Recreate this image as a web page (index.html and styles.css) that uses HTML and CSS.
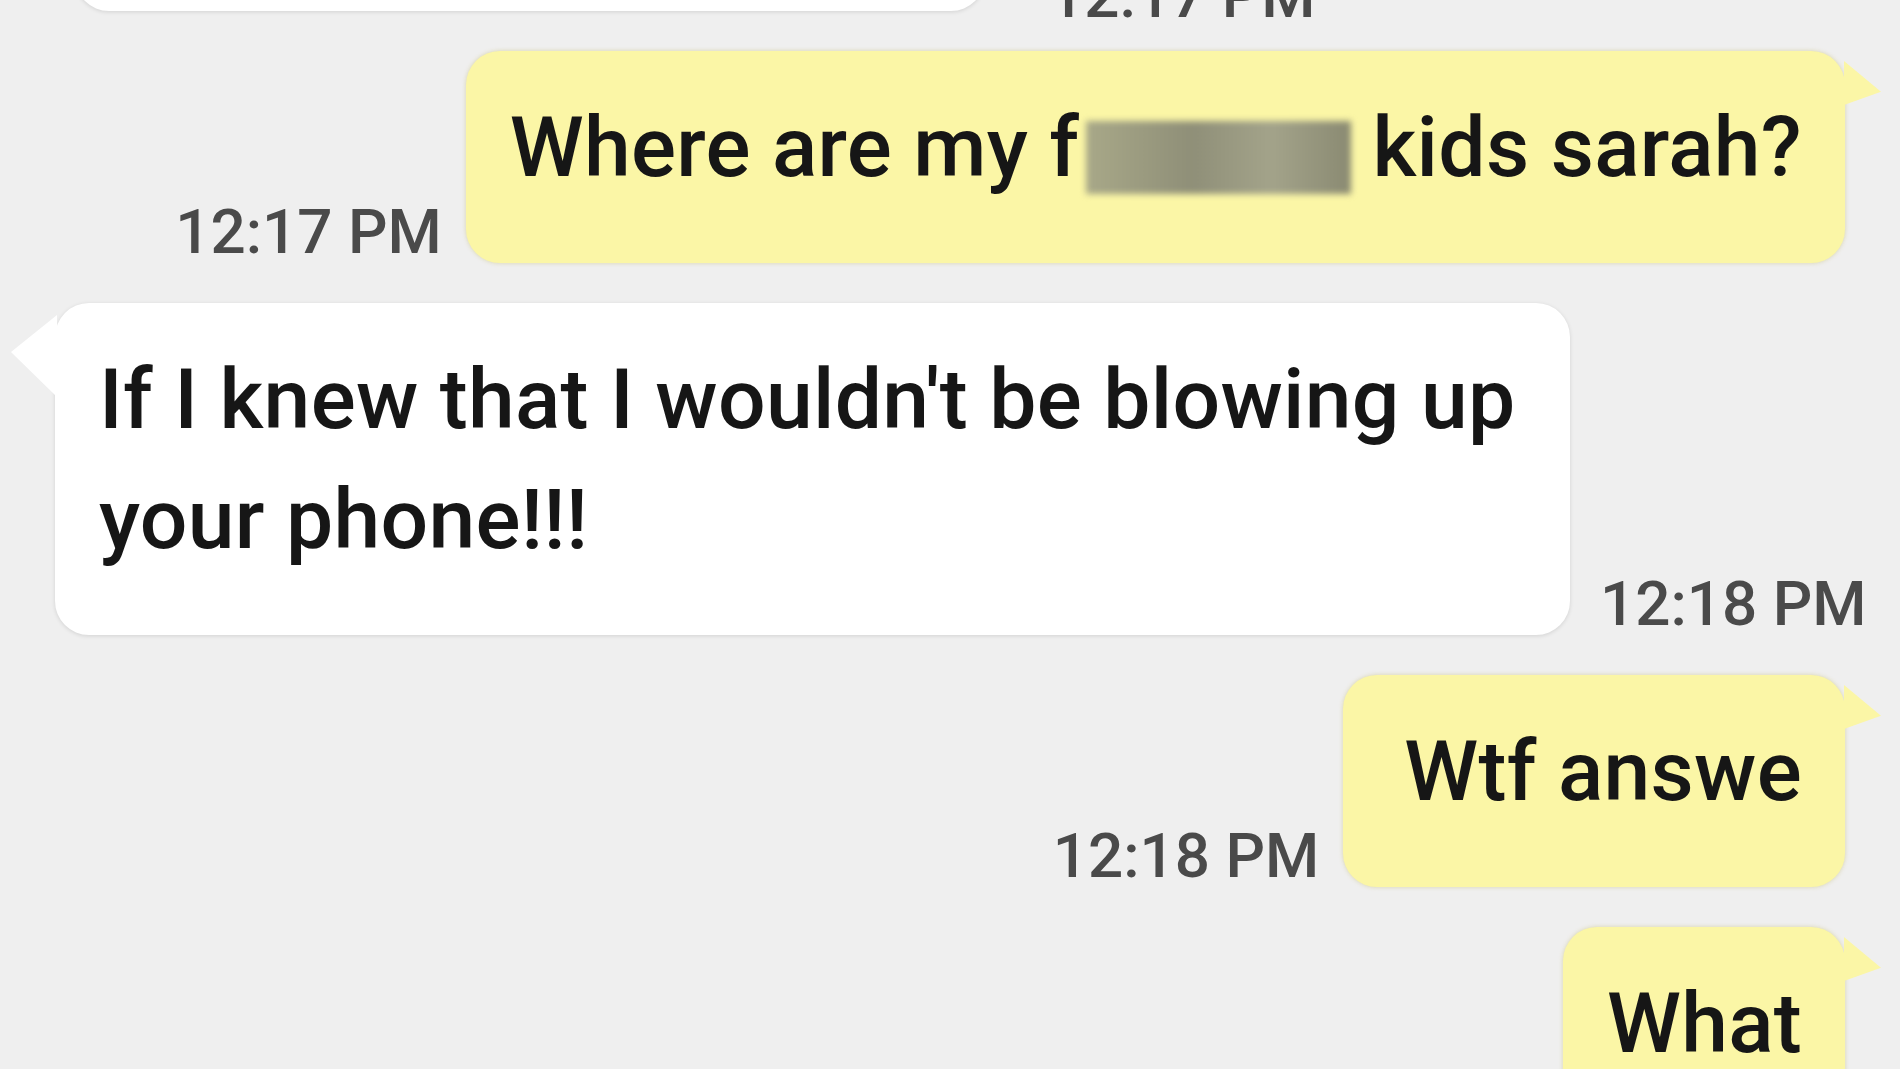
FILE: index.html
```html
<!DOCTYPE html>
<html lang="en">
<head>
  <meta charset="UTF-8">
  <meta name="viewport" content="width=device-width, initial-scale=1.0">
  <title>Messages</title>
  <link rel="stylesheet" href="styles.css">
</head>
<body>

  <div class="thread">
    <!-- mensaje anterior, cortado arriba -->
    <div class="row row-in row-cut">
      <div class="bubble bubble-in bubble-cut"></div>
      <span class="time time-cut">12:17 PM</span>
    </div>

    <div class="row row-out">
      <span class="time">12:17 PM</span>
      <div class="bubble bubble-out">Where are my f<span class="censor"></span> kids sarah?</div>
    </div>

    <div class="row row-in">
      <div class="bubble bubble-in">If I knew that I wouldn't be blowing up your phone!!!</div>
      <span class="time">12:18 PM</span>
    </div>

    <div class="row row-out">
      <span class="time">12:18 PM</span>
      <div class="bubble bubble-out bubble-short">Wtf answe</div>
    </div>

    <div class="row row-out">
      <div class="bubble bubble-out">What</div>
    </div>
  </div>

</body>
</html>
```

FILE: styles.css
```css
body {
  font-family: 'Roboto', 'Liberation Sans', sans-serif;
  background-color: #efefef;
  margin: 0;
  height: 1069px;
  overflow: hidden;
}

.thread {
  display: flex;
  flex-direction: column;
  gap: 40px;
  padding: 0 38px 0 55px;
}

.row {
  display: flex;
  align-items: flex-end;
}

.row-out {
  justify-content: flex-end;
  gap: 24px;
  padding-right: 17px;
}

.row-in {
  justify-content: flex-start;
  gap: 30px;
}

.row-cut {
  margin-top: -191px;
  padding-left: 20px;
  gap: 64px;
}

.bubble {
  position: relative;
  flex-shrink: 0;
  font-size: 84px;
  font-weight: 500;
  letter-spacing: 0.3px;
  line-height: 120px;
  color: #161616;
  padding: 37px 43px 55px 44px;
  border-radius: 34px;
}

.bubble-out {
  background-color: #fbf6a6;
  box-shadow: 0 0 4px rgba(190, 180, 90, 0.45);
}

.bubble-out::after {
  content: "";
  position: absolute;
  top: 10px;
  right: -36px;
  width: 37px;
  height: 44px;
  background-color: #fbf6a6;
  clip-path: polygon(0 0, 100% 70%, 0 100%);
}

.bubble-in {
  background-color: #ffffff;
  max-width: 1428px;
  box-shadow: 0 1px 4px rgba(0, 0, 0, 0.12);
}

.bubble-in::after {
  content: "";
  position: absolute;
  top: 12px;
  left: -44px;
  width: 46px;
  height: 82px;
  background-color: #ffffff;
  clip-path: polygon(100% 0, 0 45%, 100% 100%);
}

.bubble-cut {
  width: 823px;
  height: 110px;
}

.bubble-cut::after {
  display: none;
}

.bubble-short {
  padding-left: 61px;
}

.censor {
  display: inline-block;
  width: 265px;
  height: 73px;
  margin-left: 7px;
  vertical-align: -18px;
  background: linear-gradient(90deg, #a8a888, #8f8f78 40%, #a3a38a 70%, #8a8a72);
  filter: blur(3px);
}

.time {
  flex-shrink: 0;
  font-size: 62px;
  font-weight: 500;
  letter-spacing: 0;
  line-height: 62px;
  color: #4a4a4a;
}

.time-cut {
  margin-bottom: -16px;
}
```
